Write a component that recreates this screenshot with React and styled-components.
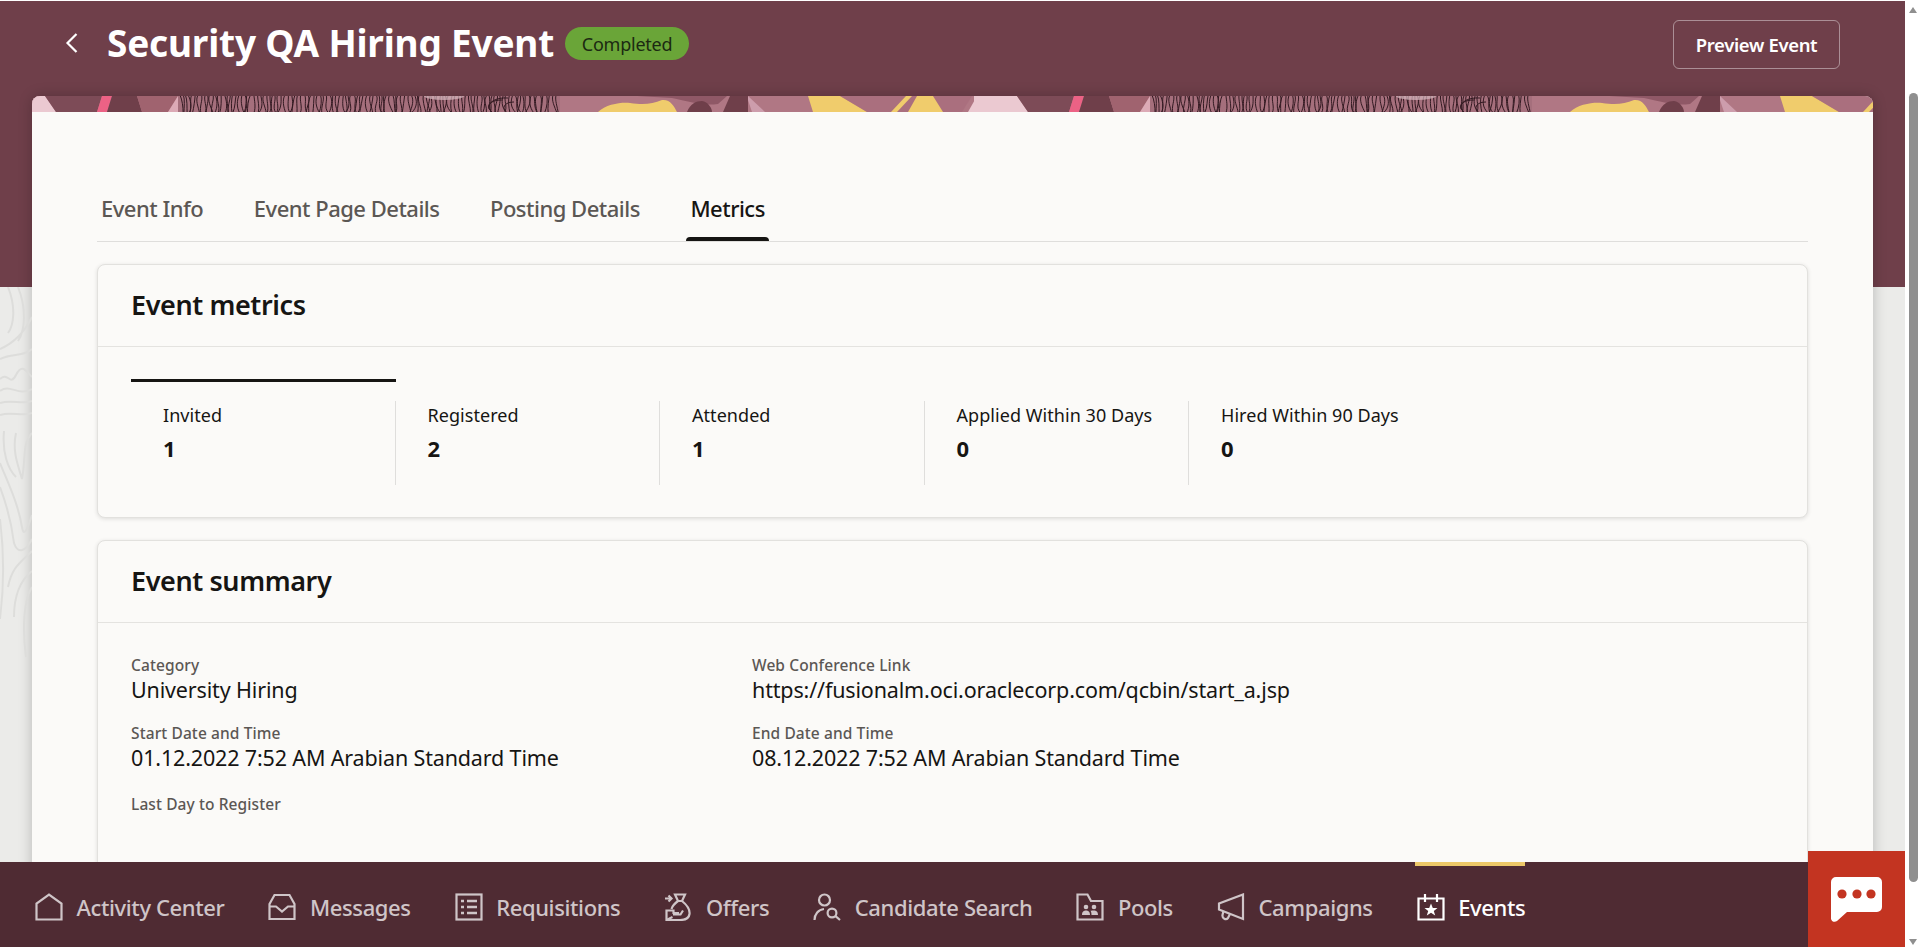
import React from "react";
import styled, { createGlobalStyle } from "styled-components";

const GlobalStyle = createGlobalStyle`
  html, body { margin: 0; padding: 0; height: 100%; overflow: hidden; background: #fff; }
  body { font-family: "Noto Sans", "Open Sans", sans-serif; color: #161513; }
  #root { height: 100%; }
  * { box-sizing: border-box; }
`;

const Shell = styled.div`
  display: flex;
  height: 100vh;
  padding-top: 1px;
`;
const Viewport = styled.div`
  flex: 1;
  min-width: 0;
  display: flex;
  flex-direction: column;
  position: relative;
`;
const Stage = styled.main`
  flex: 1;
  min-height: 0;
  overflow: hidden;
  position: relative;
  background: linear-gradient(#6f3f4a 0 286px, #ebebe9 286px);
`;
const Contours = styled.svg`
  position: absolute;
  left: 0;
  top: 286px;
  width: 32px;
  height: 400px;
`;
const Header = styled.header`
  height: 95px;
  padding: 19px 65px 0 65px;
  display: flex;
  align-items: flex-start;
  color: #fff;
`;
const BackButton = styled.button`
  width: 42px;
  height: 46px;
  padding: 0;
  border: 0;
  background: none;
  display: flex;
  align-items: center;
  color: #fff;
`;
const Title = styled.h1`
  margin: 0;
  font-size: 37px;
  line-height: 46px;
  font-weight: 700;
  letter-spacing: -0.2px;
  white-space: nowrap;
`;
const Badge = styled.span`
  margin: 7px 0 0 11px;
  height: 33px;
  width: 124px;
  border-radius: 17px;
  background: #6aa538;
  color: #1c2a12;
  font-size: 18px;
  letter-spacing: -0.25px;
  display: flex;
  align-items: center;
  justify-content: center;
`;
const PreviewButton = styled.button`
  margin-left: auto;
  width: 167px;
  height: 49px;
  border: 1px solid rgba(255, 255, 255, 0.42);
  border-radius: 6px;
  background: transparent;
  color: #fff;
  font: 600 18.5px "Noto Sans", sans-serif;
  letter-spacing: -0.35px;
`;
const Card = styled.section`
  margin: 0 32px;
  border-radius: 8px 8px 0 0;
  background: #fbfaf8;
  box-shadow: 0 0 14px rgba(0, 0, 0, 0.22);
  overflow: hidden;
`;
const Banner = styled.svg`
  display: block;
  width: 100%;
  height: 16px;
`;
const CardBody = styled.div`
  padding: 65px 65px 0;
`;
const TabList = styled.nav`
  display: flex;
  gap: 42.5px;
  height: 65px;
  border-bottom: 1px solid #dfdedc;
  margin-bottom: 22px;
`;
const Tab = styled.a`
  position: relative;
  padding: 0 4px 2px;
  height: 64px;
  display: flex;
  align-items: center;
  font-size: 22px;
  font-weight: 500;
  letter-spacing: -0.5px;
  color: ${(p) => (p.$active ? "#161513" : "#5b5754")};
  ${(p) =>
    p.$active &&
    `&::after {
      content: "";
      position: absolute;
      left: 0;
      right: 0;
      bottom: 0;
      height: 4px;
      background: #161513;
      border-radius: 4px 4px 0 0;
    }`}
`;
const Panel = styled.div`
  border: 1px solid #e2e1de;
  border-radius: 8px;
  background: #fbfaf8;
  box-shadow: 0 1px 4px rgba(0, 0, 0, 0.12);
  margin-bottom: 22px;
`;
const PanelHead = styled.div`
  height: 82px;
  padding: 0 33px 2px;
  display: flex;
  align-items: center;
  border-bottom: 1px solid #e4e3e0;
`;
const PanelTitle = styled.h2`
  margin: 0;
  font-size: 27px;
  font-weight: 600;
  letter-spacing: -0.4px;
  color: #161513;
`;
const MetricRow = styled.div`
  display: flex;
  padding: 32px 33px;
`;
const Metric = styled.div`
  width: 264.5px;
  border-top: 3px solid ${(p) => (p.$active ? "#161513" : "transparent")};
  padding-top: 19px;
`;
const MetricCell = styled.div`
  height: 84px;
  padding: 2px 0 0 32px;
  border-right: 1px solid ${(p) => (p.$last ? "transparent" : "#dfdedc")};
`;
const MetricLabel = styled.div`
  font-size: 18px;
  line-height: 25px;
  letter-spacing: 0.05px;
  color: #161513;
  white-space: nowrap;
`;
const MetricValue = styled.div`
  margin-top: 6px;
  font-size: 22px;
  line-height: 28px;
  font-weight: 700;
`;
const SummaryGrid = styled.div`
  display: grid;
  grid-template-columns: 621px 1fr;
  row-gap: 19px;
  padding: 32px 33px 80px;
`;
const Field = styled.div`
  margin-top: ${(p) => (p.$spaced ? "3px" : 0)};
`;
const FieldLabel = styled.div`
  font-size: 15.5px;
  line-height: 21px;
  font-weight: 500;
  letter-spacing: 0.1px;
  color: #5b5754;
`;
const FieldValue = styled.div`
  font-size: 21.5px;
  line-height: 28px;
  letter-spacing: -0.15px;
  color: #161513;
`;
const NavBar = styled.nav`
  flex: none;
  height: 85px;
  background: #4f2b33;
  display: flex;
  align-items: center;
  gap: 44px;
  padding-left: 35px;
`;
const NavItem = styled.a`
  position: relative;
  height: 100%;
  padding-top: 4px;
  display: flex;
  align-items: center;
  gap: 13.5px;
  font-size: 22px;
  font-weight: 500;
  letter-spacing: -0.38px;
  color: ${(p) => (p.$active ? "#fff" : "#cfc5c8")};
  white-space: nowrap;
  svg {
    flex: none;
    display: block;
  }
  ${(p) =>
    p.$active &&
    `&::before {
      content: "";
      position: absolute;
      left: -2px;
      right: 0;
      top: 0;
      height: 4px;
      background: #edc868;
    }`}
`;
const ChatButton = styled.button`
  position: absolute;
  right: 0;
  bottom: 0;
  width: 97px;
  height: 96px;
  padding: 0;
  border: 0;
  background: #c33421;
  display: flex;
  align-items: center;
  justify-content: center;
`;
const ScrollTrack = styled.aside`
  flex: none;
  width: 15px;
  margin-top: -1px;
  background: #fff;
  display: flex;
  flex-direction: column;
  align-items: center;
  padding: 7px 0 2px 1px;
`;
const ScrollArrow = styled.span`
  flex: none;
  width: 0;
  height: 0;
  border-left: 4.5px solid transparent;
  border-right: 4.5px solid transparent;
  ${(p) =>
    p.$down ? "border-top: 6px solid #8f8f8f;" : "border-bottom: 6px solid #8f8f8f;"}
`;
const ScrollThumb = styled.span`
  flex: none;
  width: 9px;
  height: 789px;
  margin: 80px 0 auto;
  border-radius: 5px;
  background: #8f8f8f;
`;

/* ---- banner artwork: one 972px tile, x measured from the card's left edge ---- */
function seeded(seed) {
  let s = seed;
  return () => {
    s = (s * 9301 + 49297) % 233280;
    return s / 233280;
  };
}
const grainPaths = (() => {
  const r = seeded(42);
  const out = [];
  let x = 148;
  while (x < 526) {
    const lean = (r() - 0.5) * 8;
    const b1 = (r() - 0.5) * 7;
    const b2 = (r() - 0.5) * 7;
    out.push(
      `M${x.toFixed(1)} -1C${(x + b1).toFixed(1)} 4 ${(x + b2).toFixed(1)} 11 ${(x + lean).toFixed(1)} 17`
    );
    x += 1.9 + r() * 2;
  }
  return out.join(" ");
})();

function BannerTile({ dx }) {
  return (
    <g transform={`translate(${dx} 0)`}>
      <rect x="-27" y="0" width="972" height="16" fill="#b07784" />
      <path d="M-30 0H13L24 16H-30Z" fill="#ebc9d1" />
      <path d="M13 0H70L65 16H24Z" fill="#7d4b57" />
      <path d="M70 0H80L75 16H65Z" fill="#ec6285" />
      <path d="M80 0H105L110 16H75Z" fill="#6f3f4a" />
      <path d="M105 0H146L136 16H110Z" fill="#a0636f" />
      <path d="M146 0L136 16H150L156 0Z" fill="#dcaab6" />
      <rect x="146" y="0" width="382" height="16" fill="#a56f7c" />
      <path d={grainPaths} fill="none" stroke="#331a22" strokeWidth="1" />
      <ellipse cx="412" cy="0" rx="20" ry="4" fill="#d6b6bd" opacity="0.7" />
      <path d="M470 4c-12 0-16 6-12 10M476 2c-16-1-24 8-16 14M482 6c-8 0-12 4-9 9" fill="none" stroke="#331a22" strokeWidth="1" />
      <path d="M605 0H695L686 8C670 10 660 6 640 2Z" fill="#8f5866" />
      <path d="M566 16C574 8 590 6 598 7C612 9 620 8 630 4C638 3 642 10 645 16Z" fill="#f0cc6c" />
      <path d="M655 16C658 8 664 5 670 5C676 6 680 12 680 16Z" fill="#6f3f4a" />
      <path d="M698 0H716V16H691Z" fill="#6f3f4a" />
      <path d="M716 0L733 16H720L716 4Z" fill="#cd9dac" />
      <path d="M776 0H808L835 16H781Z" fill="#f0cc6c" />
      <path d="M808 0H940L930 16H835Z" fill="#a5697a" opacity="0.55" />
      <path d="M874 0H880L865 16H859Z" fill="#f0cc6c" />
      <path d="M885 0H901L911 16H876Z" fill="#f0cc6c" />
      <path d="M945 0H988L998 16H936Z" fill="#ebc9d1" />
    </g>
  );
}

const BannerArt = () => (
  <Banner viewBox="0 0 1841 16" preserveAspectRatio="none" aria-hidden="true">
    <BannerTile dx={-972} />
    <BannerTile dx={0} />
    <BannerTile dx={972} />
    <BannerTile dx={1944} />
  </Banner>
);

const ContourArt = () => (
  <Contours viewBox="0 0 32 400" aria-hidden="true">
    <g fill="none" stroke="#dddddb" strokeWidth="2">
      <path d="M8 0C16 20 14 38 8 46M18 0C26 20 26 42 18 54M0 62C14 56 24 46 32 30" />
      <path d="M0 72C12 66 24 70 32 62M0 92C8 84 10 100 16 88S26 84 32 90M0 104C10 96 18 110 32 102" />
      <path d="M0 116C12 112 22 118 32 114M0 128C12 124 22 130 32 126" />
      <path d="M4 144C2 166 8 182 16 190M16 146C12 164 18 178 22 192C26 172 22 156 32 146" />
      <path d="M0 176C8 196 18 216 22 240C24 252 28 240 32 228M0 200C6 216 12 240 14 256C18 268 26 264 32 252" />
      <path d="M0 232C4 264 4 300 0 332M8 300C12 280 20 276 32 264M14 330C14 306 22 292 32 284M26 370C22 340 24 312 32 300" />
    </g>
  </Contours>
);

/* ---- nav icons ---- */
const Ico = ({ children }) => (
  <svg width="28" height="28" viewBox="0 0 28 28" fill="none" stroke="currentColor" strokeWidth="2.2" aria-hidden="true">
    {children}
  </svg>
);
const HomeIcon = () => (
  <Ico>
    <path d="M1.5 26.5V10.5L14 1.5L26.5 10.5V26.5Z" />
  </Ico>
);
const InboxIcon = () => (
  <Ico>
    <path d="M6.5 2H21.5L26.5 11V26H1.5V11Z" />
    <path d="M1.5 13.5H8L14 18.5L20 13.5H26.5" />
  </Ico>
);
const ListIcon = () => (
  <Ico>
    <rect x="1.5" y="1.5" width="25" height="25" />
    <path d="M6 8H9M12 8H22M6 14H9M12 14H22M6 20H9M12 20H22" strokeWidth="2.4" />
  </Ico>
);
const OfferIcon = () => (
  <Ico>
    <path d="M1 5.5H7M4.5 2.5L7.5 5.5L4.5 8.5" />
    <path d="M11 1.5H21L18 8H14Z" />
    <path d="M14 8C10 11 8 14 7.5 16M18 8C23 12 26 17 25.5 21C25 25 21 27 16 27H2.5V17.5H9.5V20H15" />
    <path d="M9 21.5H16.5L19 17.5M8.5 24L2.5 27" />
  </Ico>
);
const PersonSearchIcon = () => (
  <Ico>
    <circle cx="11.5" cy="7" r="5.5" />
    <path d="M1.5 27C1.5 21 5.5 16.5 11 16" />
    <circle cx="19" cy="20" r="4.4" />
    <path d="M22.5 23.2L27 27" />
  </Ico>
);
const PoolIcon = () => (
  <Ico>
    <path d="M1.5 26.5V1.5H11.5L15 8H26.5V26.5Z" />
    <g fill="currentColor" stroke="none">
      <circle cx="10" cy="14" r="2.3" />
      <circle cx="18" cy="14" r="2.3" />
      <path d="M6 22C6 18.5 8 17.5 10 17.5S14 18.5 14 22ZM14.5 17.8C15.6 17.5 16.5 17.5 18 17.5C20 17.5 22 18.5 22 22H15.5C15.5 20 15.2 18.8 14.5 17.8Z" />
    </g>
  </Ico>
);
const MegaphoneIcon = () => (
  <Ico>
    <path d="M26 1.5V26L2 16.5V10.5Z" />
    <path d="M6.5 18L5.5 22C5 25.5 9 27.5 11 25L13 21" />
  </Ico>
);
const CalendarStarIcon = () => (
  <Ico>
    <path d="M1.5 5.5H26.5V26.5H1.5Z" />
    <path d="M8 1V9M20 1V9" />
    <path d="M14 10.5L15.8 15H20.5L16.8 17.9L18.2 22.5L14 19.8L9.8 22.5L11.2 17.9L7.5 15H12.2Z" fill="currentColor" stroke="none" />
  </Ico>
);

const ChevronLeft = () => (
  <svg width="14" height="20" viewBox="0 0 14 20" fill="none" stroke="currentColor" strokeWidth="2.2" aria-hidden="true">
    <path d="M11.5 1L2.5 10L11.5 19" />
  </svg>
);
const ChatIcon = () => (
  <svg width="51" height="45" viewBox="0 0 51 45" aria-hidden="true">
    <path d="M5 0H46A5 5 0 0 1 51 5V30A5 5 0 0 1 46 35H16L6 44C4 45.5 1 45 0 42V5A5 5 0 0 1 5 0Z" fill="#fff" />
    <circle cx="11" cy="17" r="4.6" fill="#c33421" />
    <circle cx="26" cy="17" r="4.6" fill="#c33421" />
    <circle cx="40" cy="17" r="4.6" fill="#c33421" />
  </svg>
);

const navItems = [
  { label: "Activity Center", Icon: HomeIcon },
  { label: "Messages", Icon: InboxIcon },
  { label: "Requisitions", Icon: ListIcon },
  { label: "Offers", Icon: OfferIcon },
  { label: "Candidate Search", Icon: PersonSearchIcon },
  { label: "Pools", Icon: PoolIcon },
  { label: "Campaigns", Icon: MegaphoneIcon },
  { label: "Events", Icon: CalendarStarIcon, active: true },
];
const tabs = ["Event Info", "Event Page Details", "Posting Details", "Metrics"];
const metrics = [
  ["Invited", 1],
  ["Registered", 2],
  ["Attended", 1],
  ["Applied Within 30 Days", 0],
  ["Hired Within 90 Days", 0],
];

export default function App() {
  return (
    <>
      <GlobalStyle />
      <Shell>
        <Viewport>
          <Stage>
            <ContourArt />
            <Header>
              <BackButton aria-label="Back">
                <ChevronLeft />
              </BackButton>
              <Title>Security QA Hiring Event</Title>
              <Badge>Completed</Badge>
              <PreviewButton>Preview Event</PreviewButton>
            </Header>
            <Card>
              <BannerArt />
              <CardBody>
                <TabList>
                  {tabs.map((t) => (
                    <Tab key={t} $active={t === "Metrics"}>
                      {t}
                    </Tab>
                  ))}
                </TabList>
                <Panel>
                  <PanelHead>
                    <PanelTitle>Event metrics</PanelTitle>
                  </PanelHead>
                  <MetricRow>
                    {metrics.map(([label, value], i) => (
                      <Metric key={label} $active={i === 0}>
                        <MetricCell $last={i === metrics.length - 1}>
                          <MetricLabel>{label}</MetricLabel>
                          <MetricValue>{value}</MetricValue>
                        </MetricCell>
                      </Metric>
                    ))}
                  </MetricRow>
                </Panel>
                <Panel>
                  <PanelHead>
                    <PanelTitle>Event summary</PanelTitle>
                  </PanelHead>
                  <SummaryGrid>
                    <Field>
                      <FieldLabel>Category</FieldLabel>
                      <FieldValue>University Hiring</FieldValue>
                    </Field>
                    <Field>
                      <FieldLabel>Web Conference Link</FieldLabel>
                      <FieldValue>https://fusionalm.oci.oraclecorp.com/qcbin/start_a.jsp</FieldValue>
                    </Field>
                    <Field>
                      <FieldLabel>Start Date and Time</FieldLabel>
                      <FieldValue>01.12.2022 7:52 AM Arabian Standard Time</FieldValue>
                    </Field>
                    <Field>
                      <FieldLabel>End Date and Time</FieldLabel>
                      <FieldValue>08.12.2022 7:52 AM Arabian Standard Time</FieldValue>
                    </Field>
                    <Field $spaced>
                      <FieldLabel>Last Day to Register</FieldLabel>
                    </Field>
                  </SummaryGrid>
                </Panel>
              </CardBody>
            </Card>
          </Stage>
          <NavBar>
            {navItems.map(({ label, Icon, active }) => (
              <NavItem key={label} $active={active}>
                <Icon />
                {label}
              </NavItem>
            ))}
          </NavBar>
          <ChatButton aria-label="Chat">
            <ChatIcon />
          </ChatButton>
        </Viewport>
        <ScrollTrack>
          <ScrollArrow />
          <ScrollThumb />
          <ScrollArrow $down />
        </ScrollTrack>
      </Shell>
    </>
  );
}
